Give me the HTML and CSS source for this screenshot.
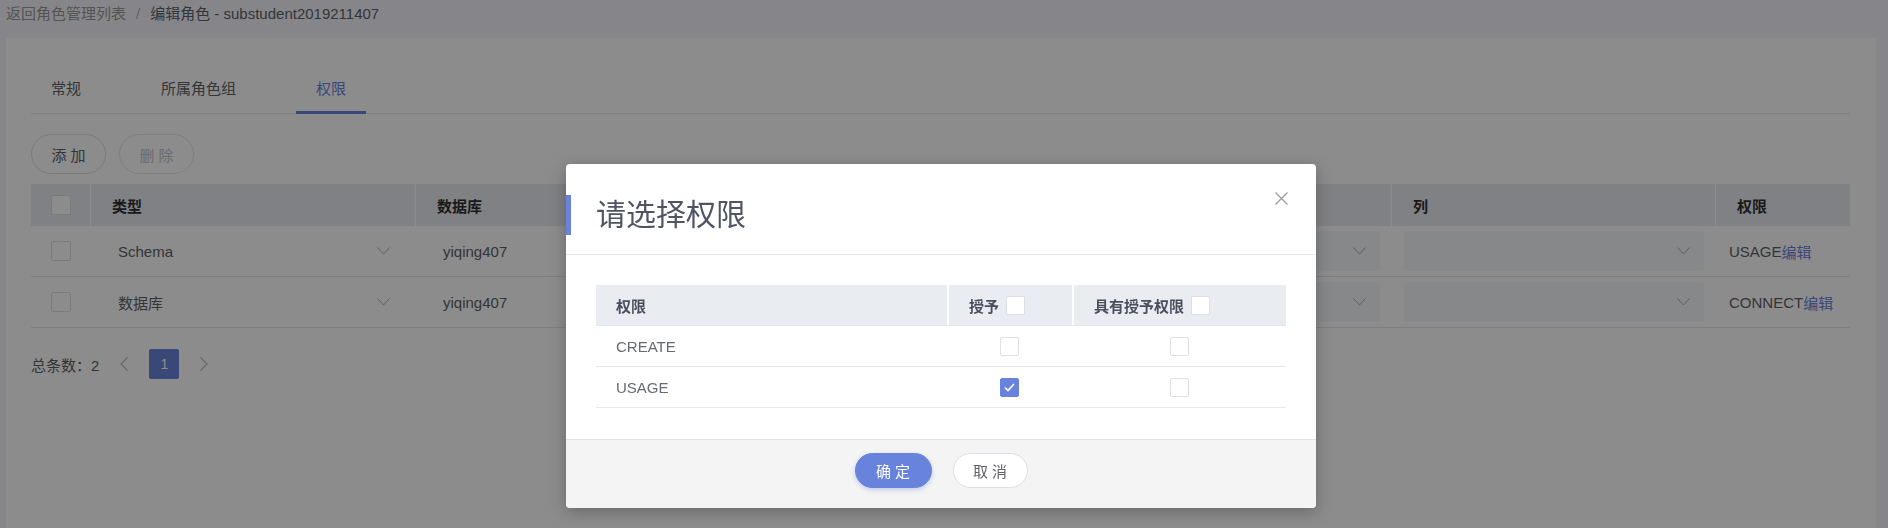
FILE: index.html
```html
<!DOCTYPE html>
<html lang="zh-CN">
<head>
<meta charset="utf-8">
<title>编辑角色</title>
<link rel="stylesheet" href="styles.css">
</head>
<body>
<div class="breadcrumb"><span class="crumb-link">返回角色管理列表</span><span class="crumb-sep">/</span><span class="crumb-current">编辑角色 - substudent2019211407</span></div>
<div class="card">
  <div class="tabs">
    <div class="tab">常规</div>
    <div class="tab">所属角色组</div>
    <div class="tab active">权限</div>
  </div>
  <div class="toolbar">
    <button class="btn">添 加</button>
    <button class="btn disabled">删 除</button>
  </div>
  <div class="grid">
    <div class="grid-row head">
      <div class="cell center"><span class="cb"></span></div>
      <div class="cell">类型</div>
      <div class="cell">数据库</div>
      <div class="cell">模式</div>
      <div class="cell">表</div>
      <div class="cell">列</div>
      <div class="cell">权限</div>
    </div>
    <div class="grid-row body">
      <div class="cell center"><span class="cb"></span></div>
      <div class="cell"><div class="select"><span>Schema</span><svg class="chev" width="13" height="8" viewBox="0 0 13 8"><path d="M0.5 0.5 L6.5 7 L12.5 0.5"/></svg></div></div>
      <div class="cell"><div class="select"><span>yiqing407</span><svg class="chev" width="13" height="8" viewBox="0 0 13 8"><path d="M0.5 0.5 L6.5 7 L12.5 0.5"/></svg></div></div>
      <div class="cell"><div class="select"><span>substudent</span><svg class="chev" width="13" height="8" viewBox="0 0 13 8"><path d="M0.5 0.5 L6.5 7 L12.5 0.5"/></svg></div></div>
      <div class="cell"><div class="select disabled"><span></span><svg class="chev" width="13" height="8" viewBox="0 0 13 8"><path d="M0.5 0.5 L6.5 7 L12.5 0.5"/></svg></div></div>
      <div class="cell"><div class="select disabled"><span></span><svg class="chev" width="13" height="8" viewBox="0 0 13 8"><path d="M0.5 0.5 L6.5 7 L12.5 0.5"/></svg></div></div>
      <div class="cell perm">USAGE<a class="link">编辑</a></div>
    </div>
    <div class="grid-row body">
      <div class="cell center"><span class="cb"></span></div>
      <div class="cell"><div class="select"><span>数据库</span><svg class="chev" width="13" height="8" viewBox="0 0 13 8"><path d="M0.5 0.5 L6.5 7 L12.5 0.5"/></svg></div></div>
      <div class="cell"><div class="select"><span>yiqing407</span><svg class="chev" width="13" height="8" viewBox="0 0 13 8"><path d="M0.5 0.5 L6.5 7 L12.5 0.5"/></svg></div></div>
      <div class="cell"><div class="select disabled"><span></span><svg class="chev" width="13" height="8" viewBox="0 0 13 8"><path d="M0.5 0.5 L6.5 7 L12.5 0.5"/></svg></div></div>
      <div class="cell"><div class="select disabled"><span></span><svg class="chev" width="13" height="8" viewBox="0 0 13 8"><path d="M0.5 0.5 L6.5 7 L12.5 0.5"/></svg></div></div>
      <div class="cell"><div class="select disabled"><span></span><svg class="chev" width="13" height="8" viewBox="0 0 13 8"><path d="M0.5 0.5 L6.5 7 L12.5 0.5"/></svg></div></div>
      <div class="cell perm">CONNECT<a class="link">编辑</a></div>
    </div>
  </div>
  <div class="pager">
    <span class="total">总条数：2</span>
    <svg class="pg-arrow" width="10" height="14" viewBox="0 0 10 14"><path d="M8.5 0.5 L2 7 L8.5 13.5"/></svg>
    <span class="page-num">1</span>
    <svg class="pg-arrow" width="10" height="14" viewBox="0 0 10 14"><path d="M1.5 0.5 L8 7 L1.5 13.5"/></svg>
  </div>
</div>

<div class="mask"></div>

<div class="dialog">
  <div class="dialog-head">
    <h2 class="dialog-title">请选择权限</h2>
    <svg class="close" width="13" height="13" viewBox="0 0 13 13"><path d="M0.5 0.5 L12.5 12.5 M12.5 0.5 L0.5 12.5"/></svg>
  </div>
  <div class="dialog-body">
    <div class="ptable">
      <div class="prow phead">
        <div class="pcell">权限</div>
        <div class="pcell sep">授予<span class="cb small"></span></div>
        <div class="pcell sep">具有授予权限<span class="cb small"></span></div>
      </div>
      <div class="prow">
        <div class="pcell">CREATE</div>
        <div class="pcell center"><span class="cb small"></span></div>
        <div class="pcell center"><span class="cb small"></span></div>
      </div>
      <div class="prow">
        <div class="pcell">USAGE</div>
        <div class="pcell center"><span class="cb small checked"><svg width="11" height="9" viewBox="0 0 11 9"><path d="M1 4.5 L4 7.5 L10 1"/></svg></span></div>
        <div class="pcell center"><span class="cb small"></span></div>
      </div>
    </div>
  </div>
  <div class="dialog-foot">
    <button class="dbtn primary">确 定</button>
    <button class="dbtn">取 消</button>
  </div>
</div>
</body>
</html>
```
FILE: styles.css
```css
* { box-sizing: border-box; }

body {
  margin: 0;
  height: 528px;
  overflow: hidden;
  background: #f4f5fb;
  font-family: "Liberation Sans", "Noto Sans CJK SC", sans-serif;
  font-size: 15px;
  color: #606266;
}

.breadcrumb {
  height: 28px;
  line-height: 28px;
  padding-left: 6px;
  margin-bottom: 10px;
  white-space: nowrap;
}
.crumb-link { color: #999; }
.crumb-sep { color: #b4b4b4; margin: 0 10px; }
.crumb-current { color: #606266; }

.card {
  background: #fff;
  margin: 0 12px 0 6px;
  padding: 27px 26px 0 25px;
  height: 490px;
}

.tabs {
  display: flex;
  gap: 40px;
  border-bottom: 1px solid #e4e7ed;
}
.tab {
  position: relative;
  height: 48px;
  line-height: 48px;
  padding: 0 20px;
  color: #606266;
}
.tab.active { color: #6883dc; }
.tab.active::after {
  content: "";
  position: absolute;
  left: 0;
  right: 0;
  bottom: -1px;
  height: 3px;
  background: #6883dc;
}

.toolbar {
  display: flex;
  gap: 13px;
  margin-top: 20px;
}
.btn {
  width: 75px;
  height: 40px;
  padding: 0;
  border: 1px solid #dcdfe6;
  border-radius: 20px;
  background: #fff;
  color: #606266;
  font-family: inherit;
  font-size: 15px;
}
.btn.disabled { color: #c0c4cc; border-color: #e4e7ed; }

.grid { margin-top: 10px; }
.grid-row {
  display: grid;
  grid-template-columns: 59px 325px 325px 325px 326px 324px 135px;
}
.grid-row.head {
  height: 42px;
  background: #e9ecf1;
  font-weight: bold;
  color: #303133;
}
.grid-row.head .cell { padding-left: 21px; }
.grid-row.head .cell + .cell { border-left: 1px solid #fff; }
.grid-row.head .cell.center { padding-left: 0; }
.grid-row.body {
  height: 51px;
  border-bottom: 1px solid #e4e7ed;
}
.cell {
  display: flex;
  align-items: center;
  padding: 0 11px 0 13px;
  min-width: 0;
  white-space: nowrap;
}
.cell.center { justify-content: center; padding: 0; }
.cell.perm { padding-left: 14px; color: #606266; }
.link { color: #6883dc; }

.cb {
  display: inline-block;
  width: 20px;
  height: 20px;
  border: 1px solid #dcdfe6;
  border-radius: 2px;
  background: #fff;
  flex: none;
}
.cb.small { width: 19px; height: 19px; }
.cb.checked {
  background: #6883dc;
  border-color: #6883dc;
  display: inline-flex;
  align-items: center;
  justify-content: center;
}
.cb.checked svg path { fill: none; stroke: #fff; stroke-width: 1.6; }

.select {
  width: 100%;
  height: 40px;
  border-radius: 4px;
  display: flex;
  align-items: center;
  justify-content: space-between;
  padding: 0 14px 0 15px;
  color: #606266;
}
.select.disabled { background: #f5f7fa; }
.chev path { fill: none; stroke: #a9adb5; stroke-width: 1; }

.pager {
  display: flex;
  align-items: center;
  gap: 20px;
  height: 30px;
  margin-top: 21px;
}
.total { color: #606266; }
.pg-arrow path { fill: none; stroke: #b4b7be; stroke-width: 1.2; }
.page-num {
  width: 30px;
  height: 30px;
  line-height: 30px;
  text-align: center;
  border-radius: 2px;
  background: #6883dc;
  color: #fff;
  font-size: 14px;
}

.mask {
  position: fixed;
  inset: 0;
  background: rgba(0, 0, 0, 0.45);
}

.dialog {
  position: absolute;
  left: 566px;
  top: 164px;
  width: 750px;
  background: #fff;
  border-radius: 4px;
  overflow: hidden;
  box-shadow: 0 4px 16px rgba(0, 0, 0, 0.25);
}
.dialog-head {
  position: relative;
  padding: 31px 30px 19px;
  border-bottom: 1px solid #e8eaec;
}
.dialog-head::before {
  content: "";
  position: absolute;
  left: 0;
  top: 31px;
  width: 5px;
  height: 40px;
  background: #6883dc;
}
.dialog-title {
  margin: 0;
  font-size: 30px;
  line-height: 40px;
  font-weight: normal;
  color: #4f5563;
}
.close {
  position: absolute;
  right: 28px;
  top: 28px;
}
.close path { fill: none; stroke: #999; stroke-width: 1.2; }

.dialog-body { padding: 30px 30px 31px; }
.prow {
  display: grid;
  grid-template-columns: 351px 125px 214px;
  height: 41px;
  border-bottom: 1px solid #e6e8eb;
}
.prow.phead {
  background: #e9ecf1;
  border-bottom: 1px solid #e2e5ea;
  font-weight: bold;
  color: #4a4f5c;
}
.pcell {
  display: flex;
  align-items: center;
  padding-left: 20px;
  color: #666a73;
  white-space: nowrap;
}
.phead .pcell { color: #4a4f5c; }
.pcell.sep { border-left: 2px solid #fff; }
.pcell.sep .cb { margin-left: 7px; }
.pcell.center { justify-content: center; padding-left: 0; }

.dialog-foot {
  background: #f4f4f4;
  border-top: 1px solid #e3e3e3;
  height: 69px;
  display: flex;
  justify-content: center;
  align-items: flex-start;
  gap: 21px;
  padding-top: 13px;
}
.dbtn {
  width: 75px;
  height: 35px;
  padding: 0;
  border-radius: 18px;
  border: 1px solid #dcdfe6;
  background: #fff;
  color: #606266;
  font-family: inherit;
  font-size: 15px;
}
.dbtn.primary {
  width: 77px;
  background: #6883dc;
  border-color: #6883dc;
  color: #fff;
  box-shadow: 0 2px 5px rgba(104, 131, 220, 0.35);
}
```
